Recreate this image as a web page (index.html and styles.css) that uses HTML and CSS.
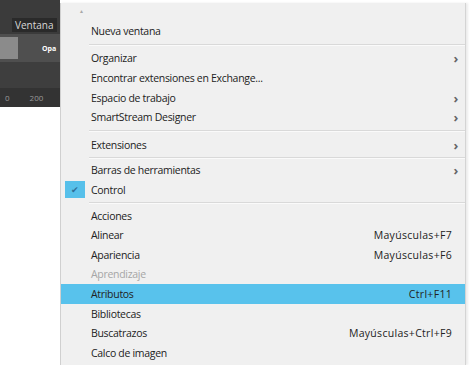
FILE: index.html
```html
<!DOCTYPE html>
<html>
<head>
    <title>Ventana</title>
    <link rel="stylesheet" href="styles.css">
</head>
<body>
    <div class="screen">
        <div class="panel">
            <div class="panel-top"><span class="tab">Ventana</span></div>
            <div class="panel-row">
                <span class="swatch"></span>
                <span class="opa">Opa</span>
            </div>
            <div class="panel-band"></div>
            <div class="ruler"><span>0</span><span>200</span></div>
        </div>

        <div class="menu">
            <div class="scroll-up">&#9650;</div>
            <div class="item"><span class="label">Nueva ventana</span></div>
            <div class="sep"></div>
            <div class="item"><span class="label">Organizar</span><span class="arrow">&#8250;</span></div>
            <div class="item"><span class="label">Encontrar extensiones en Exchange...</span></div>
            <div class="item"><span class="label">Espacio de trabajo</span><span class="arrow">&#8250;</span></div>
            <div class="item"><span class="label">SmartStream Designer</span><span class="arrow">&#8250;</span></div>
            <div class="sep"></div>
            <div class="item"><span class="label">Extensiones</span><span class="arrow">&#8250;</span></div>
            <div class="sep thin"></div>
            <div class="item"><span class="label">Barras de herramientas</span><span class="arrow">&#8250;</span></div>
            <div class="item checked">
                <span class="check">&#10004;</span>
                <span class="label">Control</span>
            </div>
            <div class="sep thin"></div>
            <div class="item"><span class="label">Acciones</span></div>
            <div class="item"><span class="label">Alinear</span><span class="key">Mayúsculas+F7</span></div>
            <div class="item"><span class="label">Apariencia</span><span class="key">Mayúsculas+F6</span></div>
            <div class="item disabled"><span class="label">Aprendizaje</span></div>
            <div class="item active"><span class="label">Atributos</span><span class="key">Ctrl+F11</span></div>
            <div class="item"><span class="label">Bibliotecas</span></div>
            <div class="item"><span class="label">Buscatrazos</span><span class="key">Mayúsculas+Ctrl+F9</span></div>
            <div class="item"><span class="label">Calco de imagen</span></div>
        </div>
    </div>
</body>
</html>
```

FILE: styles.css
```css
body {
    margin: 0;
    background: #fff;
    font-family: "Open Sans", "Noto Sans", sans-serif;
}

.screen {
    display: flex;
    align-items: flex-start;
}

/* dark app panel behind the menu */
.panel {
    width: 60px;
    height: 107px;
    background: #464646;
    display: flex;
    flex-direction: column;
    overflow: hidden;
}

.panel-top {
    height: 34px;
    background: #3b3b3b;
    padding: 12px 0 0 12px;
    box-sizing: border-box;
}

.tab {
    display: inline-block;
    background: #2a2a2a;
    color: #d8d8d8;
    font-size: 10px;
    line-height: 14px;
    padding: 0 3px;
}

.panel-row {
    height: 28px;
    background: #4f4f4f;
    display: flex;
    align-items: center;
}

.swatch {
    width: 18px;
    height: 22px;
    background: #8b8b8b;
}

.opa {
    margin-left: 24px;
    color: #fff;
    font-size: 7px;
    font-weight: bold;
}

.panel-band {
    height: 26px;
    background: #3e3e3e;
}

.ruler {
    flex: 1;
    background: #333;
    color: #9a9a9a;
    font-size: 8px;
    display: flex;
    align-items: center;
    gap: 20px;
    padding-left: 5px;
}

/* the menu */
.menu {
    margin-top: 3px;
    width: 406px;
    height: 362px;
    background: #f0f0f0;
    border-left: 1px solid #d0d0d0;
    border-right: 1px solid #d4d4d4;
    box-shadow: 2px 0 2px rgba(0, 0, 0, 0.08);
    box-sizing: border-box;
    padding-top: 1px;
    overflow: hidden;
}

.scroll-up {
    height: 17px;
    padding-left: 18px;
    font-size: 5px;
    color: #a8a8a8;
    line-height: 14px;
}

.item {
    position: relative;
    display: flex;
    align-items: center;
    height: 19.6px;
    padding: 0 12px 0 30px;
    font-size: 10.5px;
    color: #222;
    letter-spacing: -0.3px;
}

.label {
    flex: 1;
}

.arrow {
    color: #666;
    font-size: 13px;
    font-weight: bold;
    margin-right: -5px;
}

.key {
    margin-right: 1px;
    font-size: 10.5px;
    letter-spacing: 0.3px;
}

.sep {
    height: 1px;
    margin: 3px 0 3px 28px;
    background: #d9d9d9;
    border-bottom: 1px solid #fafafa;
}

.sep.thin {
    margin: 2px 0 2px 28px;
}

.checked .check {
    position: absolute;
    left: 4px;
    top: 1px;
    width: 20px;
    height: 17px;
    background: #57c0ea;
    color: #2f6f98;
    font-size: 9px;
    display: flex;
    align-items: center;
    justify-content: center;
}

.disabled {
    color: #a6a6a6;
}

.active {
    background: #58c2ec;
}
```
